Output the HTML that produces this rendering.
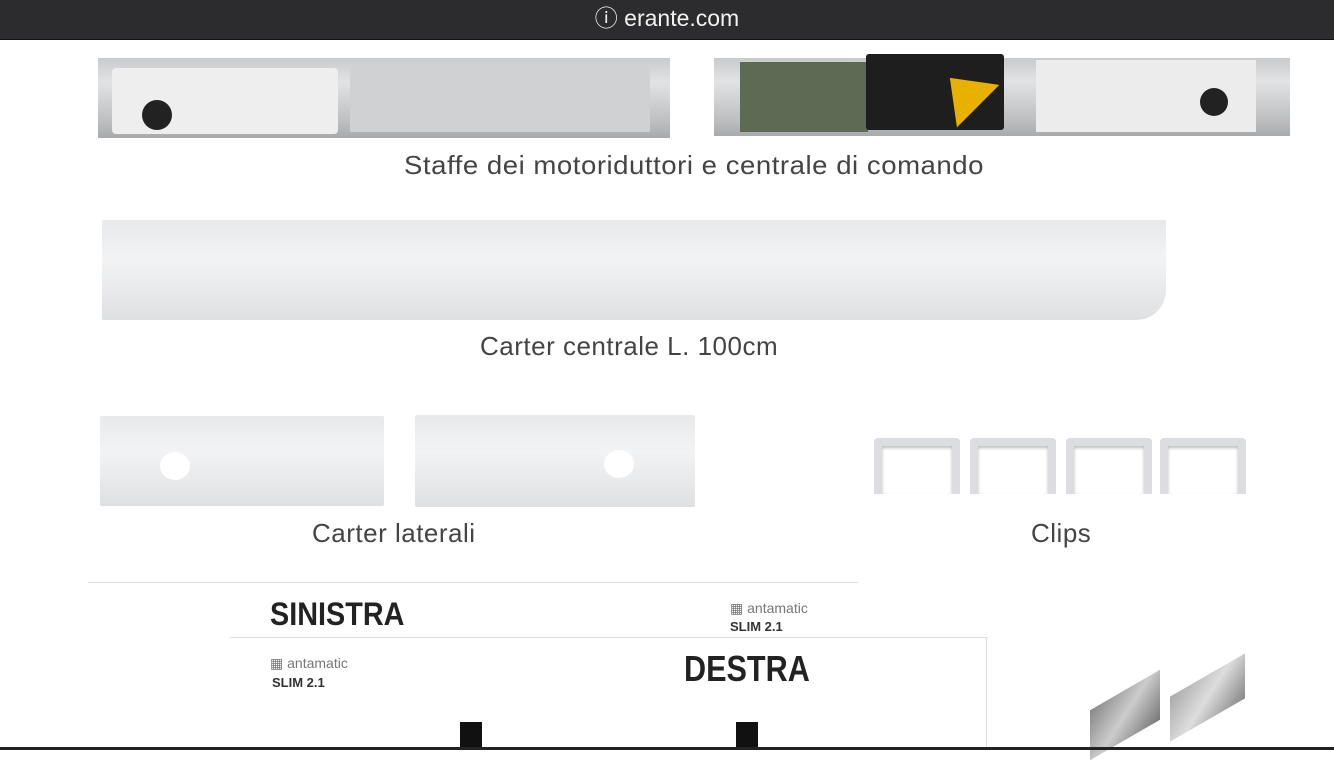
<!DOCTYPE html>
<html><head><meta charset="utf-8"><style>
*{margin:0;padding:0;box-sizing:border-box}
body{width:1334px;height:750px;overflow:hidden;background:#fff;position:relative;font-family:"Liberation Sans",sans-serif}
.a{position:absolute}
.bar{left:0;top:0;width:1334px;height:40px;background:#2c2c2e;color:#f2f2f2;font-size:23px;text-align:center;line-height:36px;border-bottom:1px solid #111}
.cap{color:#444;font-size:26px;letter-spacing:.5px;white-space:nowrap;transform-origin:left}
.cov{background:linear-gradient(#e8e9eb,#f2f3f4 40%,#dfe0e2);border-radius:2px}
.clip{width:86px;height:56px;border:8px solid #dcdde0;border-bottom:none;border-radius:4px 4px 0 0;box-shadow:inset 0 2px 3px #bbb}
</style></head><body>
<div class="a bar">ⓘ erante.com</div>

<div class="a" style="left:98px;top:58px;width:572px;height:80px;background:linear-gradient(#c9cacc,#e2e3e5 30%,#bdbec0 80%,#a9aaac)"></div>
<div class="a" style="left:112px;top:68px;width:226px;height:66px;background:#eeeeef;border-radius:4px"></div>
<div class="a" style="left:142px;top:100px;width:30px;height:30px;border-radius:50%;background:#222"></div>
<div class="a" style="left:350px;top:66px;width:300px;height:66px;background:#d0d1d3"></div>
<div class="a" style="left:714px;top:58px;width:576px;height:78px;background:linear-gradient(#c9cacc,#e2e3e5 30%,#bdbec0 80%,#a9aaac)"></div>
<div class="a" style="left:740px;top:62px;width:128px;height:70px;background:#5d6b55"></div>
<div class="a" style="left:866px;top:54px;width:138px;height:76px;background:#1e1e1e;border-radius:3px"></div>
<div class="a" style="left:934px;top:72px;width:0;height:0;border-left:30px solid transparent;border-right:30px solid transparent;border-bottom:40px solid #e8b100;transform:rotate(-45deg)"></div>
<div class="a" style="left:1036px;top:60px;width:220px;height:72px;background:#ececed"></div>
<div class="a" style="left:1200px;top:88px;width:28px;height:28px;border-radius:50%;background:#222"></div>
<div class="a cap" style="left:404px;top:150px;transform:scaleX(1.06)">Staffe dei motoriduttori e centrale di comando</div>

<div class="a cov" style="left:102px;top:220px;width:1064px;height:100px;border-bottom-right-radius:30px"></div>
<div class="a cap" style="left:480px;top:331px">Carter centrale L. 100cm</div>

<div class="a cov" style="left:100px;top:416px;width:284px;height:90px"></div>
<div class="a" style="left:160px;top:452px;width:30px;height:28px;border-radius:50%;background:#fff"></div>
<div class="a cov" style="left:415px;top:415px;width:280px;height:92px"></div>
<div class="a" style="left:604px;top:450px;width:30px;height:28px;border-radius:50%;background:#fff"></div>
<div class="a cap" style="left:312px;top:518px">Carter laterali</div>

<div class="a clip" style="left:874px;top:438px"></div>
<div class="a clip" style="left:970px;top:438px"></div>
<div class="a clip" style="left:1066px;top:438px"></div>
<div class="a clip" style="left:1160px;top:438px"></div>
<div class="a cap" style="left:1031px;top:518px">Clips</div>

<div class="a" style="left:88px;top:582px;width:770px;height:1px;background:#ddd"></div>
<div class="a" style="left:230px;top:637px;width:758px;height:1px;background:#ddd"></div>
<div class="a" style="left:986px;top:637px;width:1px;height:112px;background:#ddd"></div>
<div class="a" style="left:270px;top:596px;font-size:32px;font-weight:bold;color:#222;transform:scaleX(.9);transform-origin:left">SINISTRA</div>
<div class="a" style="left:684px;top:648px;font-size:36px;font-weight:bold;color:#222;transform:scaleX(.85);transform-origin:left">DESTRA</div>
<div class="a" style="left:730px;top:600px;font-size:14px;color:#777">▦ antamatic</div>
<div class="a" style="left:730px;top:619px;font-size:13px;font-weight:bold;color:#333">SLIM 2.1</div>
<div class="a" style="left:270px;top:655px;font-size:14px;color:#777">▦ antamatic</div>
<div class="a" style="left:272px;top:675px;font-size:13px;font-weight:bold;color:#333">SLIM 2.1</div>
<div class="a" style="left:460px;top:722px;width:22px;height:28px;background:#111"></div>
<div class="a" style="left:736px;top:722px;width:22px;height:28px;background:#111"></div>
<div class="a" style="left:1090px;top:690px;width:70px;height:50px;background:linear-gradient(135deg,#888,#ccc,#777);transform:skewY(-30deg)"></div>
<div class="a" style="left:1170px;top:675px;width:75px;height:45px;background:linear-gradient(135deg,#aaa,#ddd,#888);transform:skewY(-30deg)"></div>
<div class="a" style="left:0;top:747px;width:1334px;height:3px;background:#222"></div>
</body></html>
